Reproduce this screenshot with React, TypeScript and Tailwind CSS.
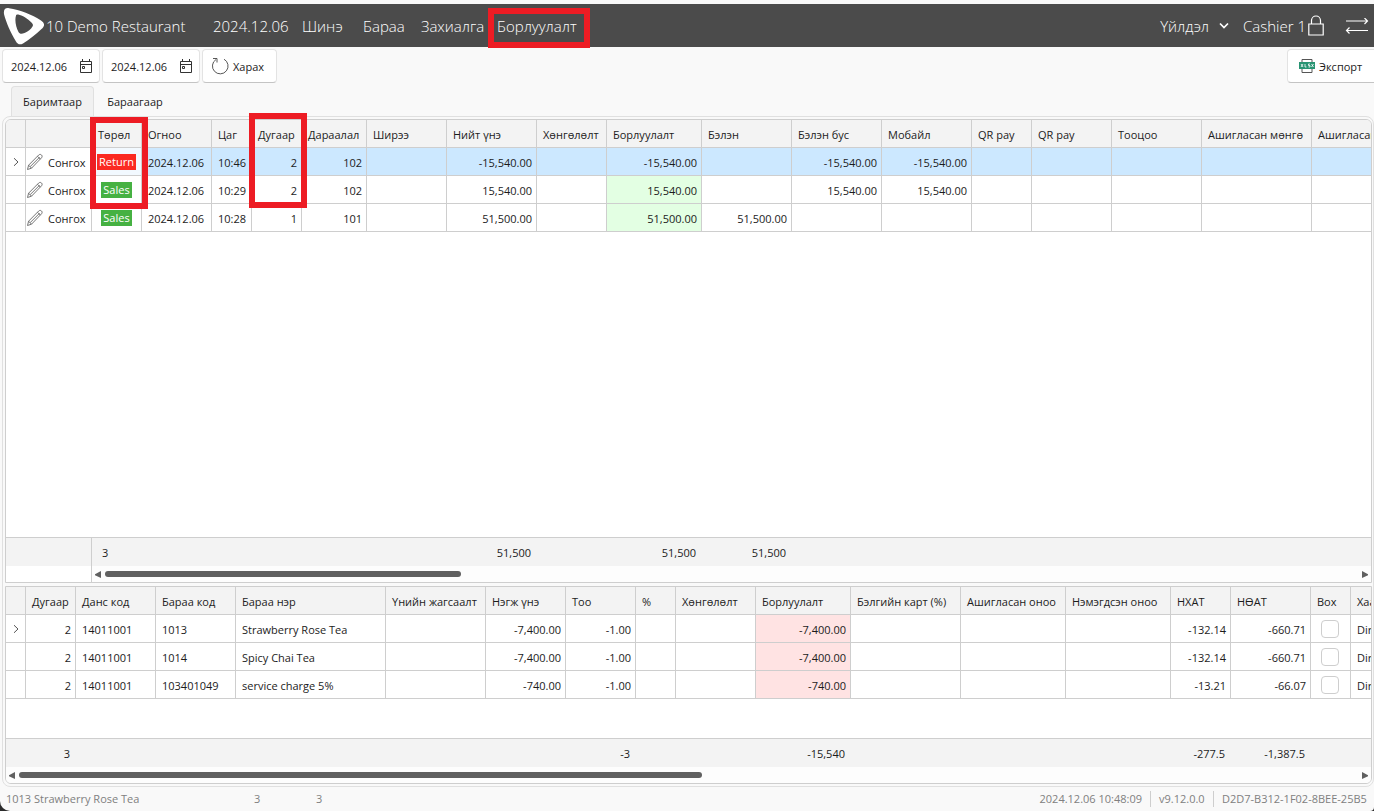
import React from "react";

type Col = { w: number; label?: string; right?: boolean };

const SALES_COLS: Col[] = [
  { w: 20 },
  { w: 66 },
  { w: 50, label: "Төрөл" },
  { w: 70, label: "Огноо" },
  { w: 40, label: "Цаг" },
  { w: 50, label: "Дугаар", right: true },
  { w: 65, label: "Дараалал", right: true },
  { w: 80, label: "Ширээ" },
  { w: 90, label: "Нийт үнэ", right: true },
  { w: 70, label: "Хөнгөлөлт", right: true },
  { w: 95, label: "Борлуулалт", right: true },
  { w: 90, label: "Бэлэн", right: true },
  { w: 90, label: "Бэлэн бус", right: true },
  { w: 90, label: "Мобайл", right: true },
  { w: 60, label: "QR pay", right: true },
  { w: 80, label: "QR pay", right: true },
  { w: 90, label: "Тооцоо", right: true },
  { w: 110, label: "Ашигласан мөнгө", right: true },
  { w: 110, label: "Ашигласан оноо", right: true },
];

const SALES_ROWS = [
  ["2024.12.06", "10:46", "2", "102", "", "-15,540.00", "", "-15,540.00", "", "-15,540.00", "-15,540.00", "", "", "", "", ""],
  ["2024.12.06", "10:29", "2", "102", "", "15,540.00", "", "15,540.00", "", "15,540.00", "15,540.00", "", "", "", "", ""],
  ["2024.12.06", "10:28", "1", "101", "", "51,500.00", "", "51,500.00", "51,500.00", "", "", "", "", "", "", ""],
];

const SALES_TOTALS = ["", "", "3", "", "", "", "", "", "51,500", "", "51,500", "51,500", "", "", "", "", "", "", ""];

const ITEM_COLS: Col[] = [
  { w: 20 },
  { w: 50, label: "Дугаар", right: true },
  { w: 80, label: "Данс код" },
  { w: 80, label: "Бараа код" },
  { w: 150, label: "Бараа нэр" },
  { w: 100, label: "Үнийн жагсаалт" },
  { w: 80, label: "Нэгж үнэ", right: true },
  { w: 70, label: "Тоо", right: true },
  { w: 40, label: "%", right: true },
  { w: 80, label: "Хөнгөлөлт", right: true },
  { w: 95, label: "Борлуулалт", right: true },
  { w: 110, label: "Бэлгийн карт (%)", right: true },
  { w: 105, label: "Ашигласан оноо", right: true },
  { w: 105, label: "Нэмэгдсэн оноо", right: true },
  { w: 60, label: "НХАТ", right: true },
  { w: 80, label: "НӨАТ", right: true },
  { w: 40, label: "Box" },
  { w: 110, label: "Хаанаас" },
];

const ITEM_ROWS = [
  ["2", "14011001", "1013", "Strawberry Rose Tea", "", "-7,400.00", "-1.00", "", "", "-7,400.00", "", "", "", "-132.14", "-660.71"],
  ["2", "14011001", "1014", "Spicy Chai Tea", "", "-7,400.00", "-1.00", "", "", "-7,400.00", "", "", "", "-132.14", "-660.71"],
  ["2", "14011001", "103401049", "service charge 5%", "", "-740.00", "-1.00", "", "", "-740.00", "", "", "", "-13.21", "-66.07"],
];

const ITEM_TOTALS = ["", "3", "", "", "", "", "", "-3", "", "", "-15,540", "", "", "", "-277.5", "-1,387.5", "", ""];

const FRAME = "h-7 border-r border-b border-[#cecece] whitespace-nowrap overflow-hidden font-normal";
const CELL = `${FRAME} p-0`;
const TEXT_CELL = `${FRAME} pt-0.5 pb-0`;

function ColGroup({ cols }: { cols: Col[] }) {
  return (
    <colgroup>
      {cols.map((c, i) => (
        <col key={i} style={{ width: c.w }} />
      ))}
    </colgroup>
  );
}

function HeadRow({ cols }: { cols: Col[] }) {
  return (
    <thead className="bg-[#f3f3f3]">
      <tr>
        {cols.map((c, i) =>
          c.label ? (
            <th key={i} scope="col" className={`${TEXT_CELL} pr-0 pl-1.5 text-left`}>
              {c.label}
            </th>
          ) : (
            <td key={i} className={CELL} />
          )
        )}
      </tr>
    </thead>
  );
}

function Totals({ cols, values, label }: { cols: Col[]; values: string[]; label: string }) {
  return (
    <table aria-label={label} className="w-max table-fixed border-separate border-spacing-0">
      <ColGroup cols={cols} />
      <tbody>
        <tr>
          {values.map((v, i) => (
            <td key={i} className={`h-7 pt-0.5 pb-0 ${cols[i].right ? "pr-1.5 pl-0 text-right" : "pr-0 pl-2.5"}`}>
              {v}
            </td>
          ))}
        </tr>
      </tbody>
    </table>
  );
}

function ScrollTrack({ thumb }: { thumb: string }) {
  return (
    <div className="flex h-4 flex-1 items-center gap-1 bg-[#fdfdfd] px-[3px]">
      <svg viewBox="0 0 6 7" className="h-[7px] w-1.5 fill-[#606060]">
        <path d="M6 0v7L0 4.200v-1z" />
      </svg>
      <div className="flex-1">
        <div className={`h-1.5 rounded-full bg-[#606060] ${thumb}`} />
      </div>
      <svg viewBox="0 0 6 7" className="h-[7px] w-1.5 fill-[#606060]">
        <path d="M0 0v7l6-2.800v-1z" />
      </svg>
    </div>
  );
}

function RowMarker() {
  return (
    <svg viewBox="0 0 8 10" className="mx-auto h-2.5 w-2 fill-none stroke-[#555]">
      <path d="M2 1.200l4 3.800-4 3.800" />
    </svg>
  );
}

function Pencil() {
  return (
    <svg viewBox="0 0 18 18" className="size-[18px] shrink-0 fill-none stroke-[#666]" strokeLinejoin="round">
      <path d="M1.500 16.500l1.100-4.300L12.700 2c.8-.8 2-.8 2.800 0s.8 2 0 2.800L5.500 15.200zM2.600 12.200l2.900 3M4.100 13.700L13.600 4.200M11.500 3.300l2.900 2.900" strokeWidth=".9" />
    </svg>
  );
}

function CalendarIcon() {
  return (
    <svg viewBox="0 0 14 14" className="h-3.5 w-3.5 fill-none stroke-[#333]">
      <path d="M1.500 2.500h11v11h-11zM1.500 5.500h11M3.500 0v3M10.500 0v3" />
      <path d="M3.500 7.500h2v2h-2z" />
    </svg>
  );
}

function DateBox({ label }: { label: string }) {
  return (
    <div className="flex h-[34px] w-[98px] items-center rounded border border-[#e3e3e3] border-b-[#c4c4c4] bg-white pr-1.5 pl-2">
      <input aria-label={label} defaultValue="2024.12.06" className="w-0 flex-1 bg-transparent pt-0.5 outline-none" />
      <button aria-label={`${label} сонгох`}>
        <CalendarIcon />
      </button>
    </div>
  );
}

export default function App() {
  return (
    <div className="h-screen overflow-hidden bg-[#2b2b2b] font-['Open_Sans','Noto_Sans',sans-serif] text-[11px] leading-4 text-[#1c1c1c]">
      <div className="flex h-full flex-col overflow-hidden rounded-br rounded-bl-[10px] bg-[#f9f9f9] pt-1">
        <header className="flex h-[43px] shrink-0 items-center bg-[#4b4b4b] text-[15px] leading-5 font-light text-white">
          <svg viewBox="0 0 44 43" className="h-[43px] w-11 shrink-0 fill-white">
            <path
              fillRule="evenodd"
              d="M9 4.200C20 6 32 10.500 41 16.500c4 2.800 4 5.500.5 8.500-5 5-12 10.500-18.500 14.400-3 1.700-5.500.8-7-2C10.500 28.500 6 18 4.100 10.500 3.200 6 5 3.600 9 4.200zM16 11.500c-1.500 5 0 11.500 2.500 16.500 1 2 3 2.300 6 1.100 3.500-1.500 6.500-4 8-6.600.8-1.500.5-2.300-.8-3.700-4-4.300-9.700-7.600-13.400-8.300-1.200-.2-2 0-2.300 1z"
            />
          </svg>
          <h1 className="ml-0.5 w-[167px] whitespace-nowrap">10 Demo Restaurant</h1>
          <span className="w-[89px] whitespace-nowrap">2024.12.06</span>
          <nav className="flex whitespace-nowrap">
            <a href="#new" className="w-[61px]">Шинэ</a>
            <a href="#items" className="w-[58px]">Бараа</a>
            <a href="#orders" className="w-[76px]">Захиалга</a>
            <a href="#sales" className="relative">
              Борлуулалт
              <span className="pointer-events-none absolute -top-2 -left-[9px] h-10 w-[102px] border-6 border-[#ed1c24]" />
            </a>
          </nav>
          <div className="ml-auto flex items-center whitespace-nowrap">
            <button className="flex items-center gap-2.5">
              Үйлдэл
              <svg viewBox="0 0 10 10" className="size-2.5 fill-none stroke-white" strokeWidth="1.700">
                <path d="M1 2.500l4 4 4-4" />
              </svg>
            </button>
            <span className="ml-3.5">Cashier 1</span>
            <button aria-label="Түгжих" className="ml-0.5">
              <svg viewBox="0 0 16 21" className="h-[21px] w-4 fill-none stroke-white">
                <path d="M.8 9h14.400v11H.8zM3.500 9V5.500a4.500 4.500 0 0 1 9 0V9" strokeWidth="1.200" />
              </svg>
            </button>
            <button aria-label="Солих" className="mr-[5px] ml-[21px]">
              <svg viewBox="0 0 24 16" className="h-4 w-6 fill-none stroke-white" strokeWidth="1.200">
                <path d="M1 3h21.500M19.500 0l3 3-3 3M23 12.500H1.500M4.500 9.500l-3 3 3 3" />
              </svg>
            </button>
          </div>
        </header>

        <div className="flex shrink-0 items-center gap-0.5 pt-0.5 pl-0.5">
          <DateBox label="Эхлэх огноо" />
          <DateBox label="Дуусах огноо" />
          <button className="flex h-[34px] w-[75px] items-center gap-1 rounded border border-[#e3e3e3] border-b-[#c4c4c4] bg-white pl-2">
            <svg viewBox="0 0 18 18" className="size-[18px] fill-none stroke-[#444]">
              <path d="M13 2.200a7.800 7.800 0 1 1-8 .3M2 1.500h4v4" strokeWidth=".9" />
            </svg>
            <span className="pt-0.5">Харах</span>
          </button>
          <button className="-mr-1 ml-auto flex h-[34px] w-[91px] items-center gap-1 rounded border border-[#e3e3e3] border-b-[#c4c4c4] bg-white pl-[11px]">
            <svg viewBox="0 0 16 14" className="h-3.5 w-4">
              <path d="M3 .5h10v13H3z" fill="white" stroke="#555" />
              <path d="M0 3h16v7H0z" fill="#299473" />
              <path d="M2 5l2 3M4 5L2 8M6 5v3h1.500M11 5H9.500v1.500H11V8H9.500M12.500 5l2 3M14.500 5l-2 3" fill="none" stroke="white" strokeWidth=".8" />
            </svg>
            <span className="pt-0.5">Экспорт</span>
          </button>
        </div>

        <div role="tablist" className="mt-[3px] flex h-[30px] shrink-0 items-stretch pl-[11px]">
          <button role="tab" aria-selected="true" className="w-[83px] rounded-t border border-b-0 border-[#e0e0e0] bg-[#f1f1f1]">
            Баримтаар
          </button>
          <button role="tab" aria-selected="false" className="w-[82px] pt-0.5">
            Бараагаар
          </button>
        </div>

        <main className="relative ml-0.5 flex min-h-0 flex-1 flex-col gap-[3px] rounded-lg border border-[#e0e0e0] p-0.5 pr-px">
          <section className="flex min-h-0 flex-1 flex-col overflow-hidden rounded-t-md border border-[#cecece] bg-white">
            <div className="min-h-0 flex-1 overflow-hidden">
              <table aria-label="Борлуулалт" className="w-max table-fixed border-separate border-spacing-0">
                <ColGroup cols={SALES_COLS} />
                <HeadRow cols={SALES_COLS} />
                <tbody>
                  {SALES_ROWS.map((row, r) => (
                    <tr key={r} className={r === 0 ? "bg-[#cce8ff]" : "bg-white"}>
                      <td className={`${CELL} bg-white`}>{r === 0 && <RowMarker />}</td>
                      <td className={`${CELL} bg-white`}>
                        <button className="flex items-center gap-1">
                          <Pencil />
                          <span className="pt-0.5">Сонгох</span>
                        </button>
                      </td>
                      <td className={`${CELL} text-center ${r === 0 ? "bg-[#f2f9ff]" : ""}`}>
                        <span className={`inline-block px-0.5 text-white ${r === 0 ? "bg-[#fb2a22]" : "bg-[#46b142]"}`}>
                          {r === 0 ? "Return" : "Sales"}
                        </span>
                      </td>
                      {row.map((v, i) => {
                        const right = SALES_COLS[i + 3].right;
                        const green = i === 7 && r > 0;
                        return (
                          <td key={i} className={`${TEXT_CELL} ${right ? "pr-1 pl-0 text-right" : "pr-0 pl-1.5"} ${green ? "bg-[#e3ffe3]" : ""}`}>
                            {v}
                          </td>
                        );
                      })}
                    </tr>
                  ))}
                </tbody>
              </table>
            </div>
            <div className="shrink-0 overflow-hidden border-t border-[#cecece] bg-[#f3f3f3]">
              <Totals cols={SALES_COLS} values={SALES_TOTALS} label="Борлуулалтын нийт дүн" />
            </div>
            <div className="flex shrink-0">
              <div className="-mt-7 w-[86px] border-r border-[#cecece]" />
              <ScrollTrack thumb="w-[356px]" />
            </div>
          </section>

          <section className="flex shrink-0 flex-col overflow-hidden rounded-b-md border border-[#cecece] bg-white">
            <div className="h-[151px] overflow-hidden">
              <table aria-label="Бараа" className="w-max table-fixed border-separate border-spacing-0">
                <ColGroup cols={ITEM_COLS} />
                <HeadRow cols={ITEM_COLS} />
                <tbody>
                  {ITEM_ROWS.map((row, r) => (
                    <tr key={r}>
                      <td className={CELL}>{r === 0 && <RowMarker />}</td>
                      {row.map((v, i) => (
                        <td key={i} className={`${TEXT_CELL} ${ITEM_COLS[i + 1].right ? "pr-1 pl-0 text-right" : "pr-0 pl-1.5"} ${i === 9 ? "bg-[#ffe3e3]" : ""}`}>
                          {v}
                        </td>
                      ))}
                      <td className={CELL}>
                        <input
                          type="checkbox"
                          aria-label={`Box ${row[2]}`}
                          className="ml-2.5 block size-[18px] appearance-none rounded border border-[#cecece] bg-white checked:bg-[#606060]"
                        />
                      </td>
                      <td className={`${TEXT_CELL} pr-0 pl-1.5`}>Direct</td>
                    </tr>
                  ))}
                </tbody>
              </table>
            </div>
            <div className="overflow-hidden border-t border-[#cecece] bg-[#f3f3f3]">
              <Totals cols={ITEM_COLS} values={ITEM_TOTALS} label="Барааны нийт дүн" />
            </div>
            <div className="flex">
              <ScrollTrack thumb="w-[683px]" />
            </div>
          </section>

          <span className="pointer-events-none absolute top-0 left-[87px] h-[92px] w-[58px] border-6 border-[#ed1c24]" />
          <span className="pointer-events-none absolute -top-1 left-[246px] h-[95px] w-[58px] border-6 border-[#ed1c24]" />
        </main>

        <footer className="flex h-6 shrink-0 items-center pl-1.5 whitespace-nowrap text-[#808080]">
          <span className="w-[248px]">1013 Strawberry Rose Tea</span>
          <span className="w-[62px]">3</span>
          <span>3</span>
          <span className="ml-auto pr-2">2024.12.06 10:48:09</span>
          <span className="w-16 border-x border-[#cecece] px-2">v9.12.0.0</span>
          <span className="w-40 pl-2">D2D7-B312-1F02-8BEE-25B5</span>
        </footer>
      </div>
    </div>
  );
}
